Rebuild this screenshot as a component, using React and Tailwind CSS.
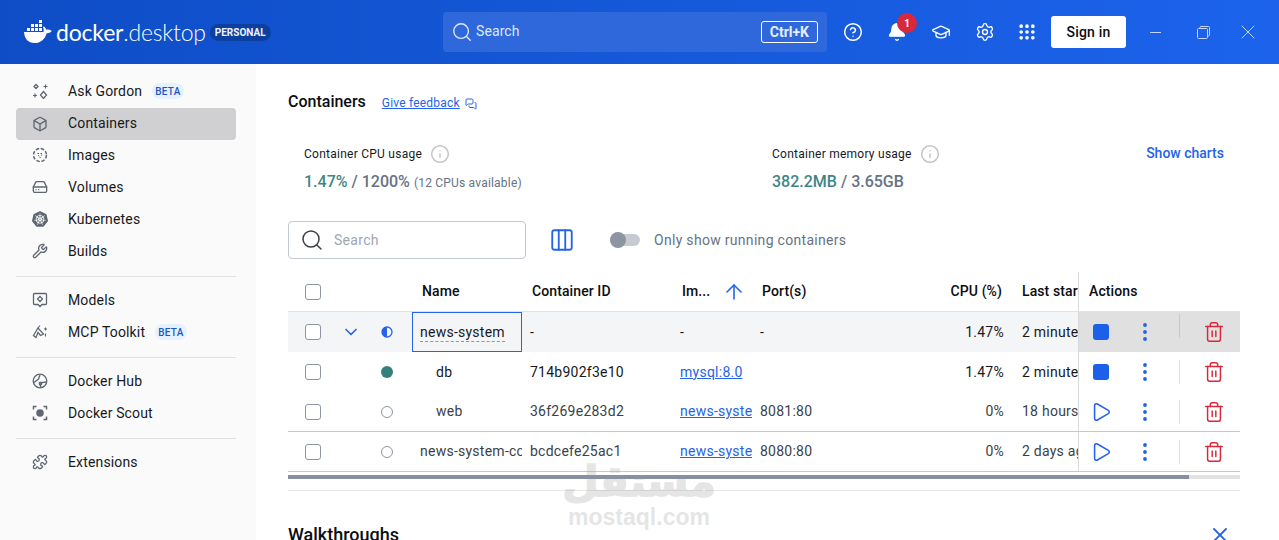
import {
  Box,
  Search,
  CircleHelp,
  Bell,
  GraduationCap,
  Settings,
  Grip,
  HardDrive,
  Wrench,
  Puzzle,
  Info,
  Columns3,
  ArrowUp,
  ChevronDown,
  EllipsisVertical,
  Trash2,
  Play,
  X,
  MessagesSquare,
} from 'lucide-react'
import { SiKubernetes } from 'react-icons/si'

function WhaleLogo() {
  return (
    <svg width="29" height="24" viewBox="0 0 29 24" fill="white">
      <rect x="3" y="8" width="3" height="3" />
      <rect x="7" y="8" width="3" height="3" />
      <rect x="11" y="8" width="3" height="3" />
      <rect x="15" y="8" width="3" height="3" />
      <rect x="7" y="4" width="3" height="3" />
      <rect x="11" y="4" width="3" height="3" />
      <rect x="15" y="4" width="3" height="3" />
      <rect x="15" y="0" width="3" height="3" />
      <path d="M0 12h19.5c.4-1.8.2-3.4-.6-4.8l1-.7c1.300.9 2 2 2.200 3.300 1.700-.5 3.500-.2 5.400.9.300.2.300.4.100.600-1.200 1.400-2.900 2-4.900 1.900C20.800 19.500 16.700 23 10.500 23 4.300 23 .6 19 0 12z" />
    </svg>
  )
}

function GordonIcon() {
  return (
    <svg width="16" height="16" viewBox="0 0 16 16" fill="none" stroke="#5f6672" strokeWidth="1.300">
      <path d="M4 1.500 6 3.500 4 5.500 2 3.500z" />
      <path d="M11.500 3.500h4M13.500 1.500v4" strokeWidth="1.200" />
      <path d="M1 12.500h4M3 10.500v4" strokeWidth="1.200" />
      <path d="M11.500 8.500 14.500 12 11.500 15.500 8.500 12z" />
    </svg>
  )
}

function ImagesIcon() {
  return (
    <svg width="16" height="16" viewBox="0 0 16 16" fill="none" stroke="#5f6672" strokeWidth="1.500">
      <circle cx="8" cy="8" r="6.500" strokeDasharray="3.500 1.600" />
      <path d="M5.500 6.500h5L8 11z" strokeWidth="1" strokeDasharray="1.500 1.500" />
    </svg>
  )
}

function ModelsIcon() {
  return (
    <svg width="16" height="16" viewBox="0 0 16 16" fill="none" stroke="#5f6672" strokeWidth="1.300">
      <path d="M2.500 1.500h11a1 1 0 0 1 1 1v9a1 1 0 0 1-1 1H10l-2 2-2-2H2.500a1 1 0 0 1-1-1v-9a1 1 0 0 1 1-1z" />
      <path d="M8 4.500 10.500 7 8 9.500 5.500 7z" />
    </svg>
  )
}

function McpIcon() {
  return (
    <svg width="16" height="16" viewBox="0 0 16 16" fill="none" stroke="#5f6672" strokeWidth="1.300">
      <path d="M1.500 11.500 6 4l5.500 6-3 1.500L6 8.500l-2 5z" />
      <path d="M6 4l2-2.500M13.500 3.500v3M12 5h3M13.500 9.500v3" strokeWidth="1.100" />
    </svg>
  )
}

function HubIcon() {
  return (
    <svg width="16" height="16" viewBox="0 0 16 16" fill="none" stroke="#5f6672" strokeWidth="1.300">
      <circle cx="8" cy="8" r="6.800" />
      <path d="M2 9.500 6.500 6 8 2M14.500 9 9.500 9.500 8 11.500l1 3" />
      <circle cx="8.500" cy="10.500" r="1.300" />
    </svg>
  )
}

function ScoutIcon() {
  return (
    <svg width="16" height="16" viewBox="0 0 16 16" fill="none" stroke="#5f6672" strokeWidth="1.500">
      <circle cx="8" cy="8" r="3" fill="#5f6672" />
      <path d="M1.500 4.500V1.500h3M11.500 1.500h3v3M14.500 11.500v3h-3M4.500 14.500h-3v-3" />
    </svg>
  )
}

function HalfStatus() {
  return (
    <svg width="12" height="12" viewBox="0 0 12 12">
      <circle cx="6" cy="6" r="5" fill="none" stroke="#2563eb" strokeWidth="1.300" />
      <path d="M6 1a5 5 0 0 0 0 10z" fill="#2563eb" />
    </svg>
  )
}

function Beta() {
  return (
    <span className="ml-[10px] inline-flex h-[16px] items-center rounded-full bg-[#e5f1fd] px-[3px] text-[10px] font-medium tracking-[0.3px] text-[#1d56c4]">
      BETA
    </span>
  )
}

function NavItem({ icon, label, active, beta }) {
  return (
    <div className={`ml-[16px] mr-[20px] flex h-[32px] items-center rounded-[4px] pl-[16px] text-[14px] tracking-[0.15px] text-[#17191d] ${active ? 'bg-[#d0d0d2]' : ''}`}>
      <span className="flex w-[16px] justify-center">{icon}</span>
      <span className={`ml-[20px] ${active ? 'pb-[2px]' : ''}`}>{label}</span>
      {beta && <Beta />}
    </div>
  )
}

function Divider() {
  return <div className="ml-[16px] mr-[20px] mb-[7px] mt-[9px] h-px bg-[#e2e2e4]" />
}

function Sidebar() {
  const ic = 'h-[16px] w-[16px] text-[#5f6672]'
  return (
    <aside className="w-[256px] shrink-0 bg-[#fafafa] pt-[11px]">
      <NavItem icon={<GordonIcon />} label="Ask Gordon" beta />
      <div className="mt-px" />
      <NavItem icon={<Box className={ic} />} label="Containers" active />
      <div className="-mt-px" />
      <NavItem icon={<ImagesIcon />} label="Images" />
      <NavItem icon={<HardDrive className={ic} />} label="Volumes" />
      <NavItem icon={<SiKubernetes className={ic} />} label="Kubernetes" />
      <NavItem icon={<Wrench className={ic} />} label="Builds" />
      <Divider />
      <NavItem icon={<ModelsIcon />} label="Models" />
      <NavItem icon={<McpIcon />} label="MCP Toolkit" beta />
      <Divider />
      <NavItem icon={<HubIcon />} label="Docker Hub" />
      <NavItem icon={<ScoutIcon />} label="Docker Scout" />
      <Divider />
      <NavItem icon={<Puzzle className={ic} />} label="Extensions" />
    </aside>
  )
}

function Header() {
  return (
    <header className="flex h-[64px] shrink-0 items-center bg-gradient-to-r from-[#0e4dc6] to-[#1c63ec] text-white">
      <div className="ml-[24px] flex w-[419px] items-center">
        <WhaleLogo />
        <span className="ml-[3px] font-['Lato'] text-[23px] leading-none tracking-[-0.2px]">
          docker<span className="font-light">.desktop</span>
        </span>
        <span className="ml-[4px] rounded-full bg-[#0d3f9f] px-[5px] py-px text-[10px] font-bold text-[#eef3fd]">PERSONAL</span>
      </div>
      <div className="flex h-[40px] w-[384px] items-center rounded-[4px] bg-[#2f68db] pl-[8px] pr-[9px]">
        <Search className="h-[22px] w-[22px] text-[#dfe8fb]" strokeWidth={1.500} />
        <span className="ml-[3px] pb-[2px] text-[14px] tracking-[0.1px] text-[#dfe8fb]">Search</span>
        <span className="ml-auto rounded-[3px] border border-white px-[8px] text-[14px] font-bold leading-[20px] text-[#e6edfc]">Ctrl+K</span>
      </div>
      <CircleHelp className="ml-[16px] h-[20px] w-[20px]" strokeWidth={1.800} />
      <div className="relative ml-[24px] flex h-[20px] w-[20px] items-center justify-center">
        <Bell className="h-[20px] w-[20px]" fill="white" strokeWidth={1.500} />
        <span className="absolute left-[10px] top-[-9px] flex h-[20px] w-[20px] items-center justify-center rounded-full bg-[#d8283c] text-[10px] font-bold">1</span>
      </div>
      <GraduationCap className="ml-[24px] h-[20px] w-[20px]" strokeWidth={1.600} />
      <Settings className="ml-[24px] h-[20px] w-[20px]" strokeWidth={1.600} />
      <Grip className="ml-[22px] h-[20px] w-[20px]" strokeWidth={2.400} />
      <button className="ml-[14px] h-[32px] w-[75px] rounded-[3px] bg-white text-[14px] font-medium tracking-[0.2px] text-[#0b0d12]">Sign in</button>
      <svg className="ml-[24px] text-[#c5d6f8]" width="12" height="12" viewBox="0 0 12 12" stroke="currentColor" fill="none">
        <path d="M0 6.500h11" />
      </svg>
      <svg className="ml-[35px] text-[#c5d6f8]" width="13" height="13" viewBox="0 0 13 13" stroke="currentColor" fill="none">
        <rect x="0.500" y="2.500" width="10" height="10" rx="1" />
        <path d="M3 2.500V1.500a1 1 0 0 1 1-1h7.500a1 1 0 0 1 1 1V9a1 1 0 0 1-1 1h-1" />
      </svg>
      <X className="ml-[26px] h-[24px] w-[24px] text-[#c5d6f8]" strokeWidth={1} />
    </header>
  )
}

function Stat({ label, children, className }) {
  return (
    <div className={className}>
      <div className="flex items-center text-[12px] tracking-[0.25px] text-[#17191d]">
        {label}
        <Info className="ml-[8px] h-[20px] w-[20px] text-[#c4c5c7]" strokeWidth={1.800} />
      </div>
      <div className="mt-[6px] flex items-baseline text-[16px] font-medium text-[#677285]">{children}</div>
    </div>
  )
}

function Check() {
  return <span className="block h-[16px] w-[16px] rounded-[3px] border-[1.500px] border-[#8d95a3] bg-white" />
}

function Actions({ running, selected }) {
  return (
    <div className={`flex h-full w-[162px] shrink-0 items-center border-l border-[#d8d9db] pl-[14px] ${selected ? 'bg-[#e0e0e0]' : 'bg-white'}`}>
      {running ? (
        <span className="block h-[16px] w-[16px] rounded-[3px] bg-[#1c5fe8]" />
      ) : (
        <Play className="-m-[3px] h-[22px] w-[22px] text-[#2563eb]" strokeWidth={1.700} />
      )}
      <EllipsisVertical className="-my-[4px] ml-[24px] h-[24px] w-[24px] text-[#2563eb]" strokeWidth={1.800} />
      <span className={`ml-[22px] h-[24px] w-px ${selected ? 'mb-[12px] bg-[#c9c9c9]' : 'bg-[#e0e1e3]'}`} />
      <Trash2 className="ml-[23px] h-[22px] w-[22px] text-[#d8283c]" strokeWidth={1.600} />
    </div>
  )
}

function Row({ status, chevron, name, indent, nameBox, id, image, port, cpu, started, running, selected, dim, borderB }) {
  return (
    <div className={`flex h-[40px] items-center text-[14px] tracking-[0.25px] ${selected ? 'bg-[#f4f5f7]' : ''} ${borderB ? 'border-b border-[#c8c9cc]' : ''} ${dim ? 'text-[#3b3f47]' : 'text-[#17191d]'}`}>
      <div className="flex w-[50px] shrink-0 justify-center"><Check /></div>
      <div className="flex w-[25px] shrink-0 justify-center">
        {chevron && <ChevronDown className="h-[20px] w-[20px] text-[#2563eb]" />}
      </div>
      <div className="mr-px flex w-[48px] shrink-0 justify-center">{status}</div>
      <div className={`h-full w-[110px] shrink-0 overflow-hidden whitespace-nowrap ${nameBox ? 'flex items-center border border-[#2563eb] pl-[7px]' : 'flex items-center pl-[8px]'}`}>
        <span className={`${indent ? 'pl-[16px]' : ''} ${nameBox ? 'border-b border-dashed border-[#8d95a3] leading-[18px]' : ''}`}>{name}</span>
      </div>
      <div className="w-[150px] shrink-0 pl-[8px]">{id}</div>
      <div className="w-[80px] shrink-0 overflow-hidden whitespace-nowrap pl-[8px]">
        {image === '-' ? image : <a className="text-[#2563eb] underline">{image}</a>}
      </div>
      <div className="w-[190px] shrink-0 pl-[8px]">{port}</div>
      <div className="w-[62px] shrink-0 text-right">{cpu}</div>
      <div className="ml-[18px] w-[56px] shrink-0 overflow-hidden whitespace-nowrap">{started}</div>
      <Actions running={running} selected={selected} />
    </div>
  )
}

function ContainerTable() {
  const running = <span className="block h-[12px] w-[12px] rounded-full bg-[#34807b]" />
  const stopped = <span className="block h-[12px] w-[12px] rounded-full border-[1.500px] border-[#8d95a3]" />
  return (
    <div className="mt-[13px]">
      <div className="flex h-[40px] items-center border-b border-[#e1e2e5] text-[14px] font-medium tracking-[0.1px] text-[#0b0d12]">
        <div className="flex w-[50px] shrink-0 justify-center"><Check /></div>
        <div className="w-[84px] shrink-0" />
        <div className="w-[110px] shrink-0">Name</div>
        <div className="w-[150px] shrink-0">Container ID</div>
        <div className="flex w-[80px] shrink-0 items-center">
          Im...
          <ArrowUp className="ml-[12px] h-[24px] w-[24px] text-[#2563eb]" strokeWidth={1.600} />
        </div>
        <div className="w-[178px] shrink-0">Port(s)</div>
        <div className="w-[62px] shrink-0 text-right">CPU (%)</div>
        <div className="ml-[20px] w-[56px] shrink-0 overflow-hidden whitespace-nowrap">Last started</div>
        <div className="flex h-full w-[162px] shrink-0 items-center border-l border-[#d8d9db] pl-[10px]">Actions</div>
      </div>
      <Row status={<HalfStatus />} chevron name="news-system" nameBox id="-" image="-" port="-" cpu="1.47%" started="2 minutes ago" running selected />
      <Row status={running} name="db" indent id="714b902f3e10" image="mysql:8.0" cpu="1.47%" started="2 minutes ago" running />
      <Row status={stopped} name="web" indent id="36f269e283d2" image="news-system-web" port="8081:80" cpu="0%" started="18 hours ago" dim borderB />
      <Row status={stopped} name="news-system-cc" id="bcdcefe25ac1" image="news-system-cc" port="8080:80" cpu="0%" started="2 days ago" dim borderB />
      <div className="mt-[3px] h-[4px] bg-[#e2e2e4]">
        <div className="h-full w-[901px] bg-[#8790a1]" />
      </div>
    </div>
  )
}

export default function App() {
  return (
    <div className="relative flex h-[540px] w-full flex-col overflow-hidden bg-white font-['Roboto',sans-serif]">
      <Header />
      <div className="flex min-h-0 flex-1">
        <Sidebar />
        <main className="min-w-0 flex-1 pl-[32px] pr-[39px] pt-[26px]">
          <div className="flex h-[24px] items-center">
            <h1 className="text-[16px] font-medium text-[#0b0d12]">Containers</h1>
            <a className="ml-[16px] mt-[2px] text-[12px] tracking-[0.2px] text-[#2563eb] underline">Give feedback</a>
            <MessagesSquare className="ml-[5px] mt-[3px] h-[12px] w-[12px] text-[#2563eb]" />
          </div>
          <div className="mt-[30px] flex items-start pl-[16px] pr-[16px]">
            <Stat label="Container CPU usage" className="w-[468px]">
              <span className="text-[#3f8585]">1.47%</span>
              <span className="ml-[4px]">/ 1200%</span>
              <span className="ml-[4px] text-[12px] font-normal tracking-[0.2px]">(12 CPUs available)</span>
            </Stat>
            <Stat label="Container memory usage">
              <span className="text-[#3f8585]">382.2MB</span>
              <span className="ml-[4px]">/ 3.65GB</span>
            </Stat>
            <a className="-mt-px ml-auto text-[14px] font-medium text-[#2563eb]">Show charts</a>
          </div>
          <div className="mt-[27px] flex items-center">
            <div className="flex h-[38px] w-[238px] items-center rounded-[4px] border border-[#c4c8d1] pl-[11px]">
              <Search className="h-[24px] w-[24px] text-[#3b3f47]" strokeWidth={1.500} />
              <span className="ml-[10px] text-[14px] tracking-[0.3px] text-[#a0a6b0]">Search</span>
            </div>
            <Columns3 className="ml-[23px] h-[26px] w-[26px] text-[#2563eb]" strokeWidth={1.700} />
            <div className="relative ml-[35px] h-[12px] w-[30px] rounded-full bg-[#c7cad1]">
              <span className="absolute left-0 top-[-2px] h-[16px] w-[16px] rounded-full bg-[#8d95a3]" />
            </div>
            <span className="ml-[14px] text-[14px] tracking-[0.3px] text-[#677285]">Only show running containers</span>
          </div>
          <ContainerTable />
          <div className="mt-[11px] h-px bg-[#e6e7e9]" />
          <div className="mt-[30px] flex items-center justify-between">
            <h2 className="text-[18px] font-medium text-[#0b0d12]">Walkthroughs</h2>
            <X className="mr-[8px] h-[24px] w-[24px] text-[#2563eb]" strokeWidth={1.800} />
          </div>
        </main>
      </div>
      <div className="pointer-events-none absolute left-[568px] top-[454px] flex w-[142px] flex-col items-center text-[#9a9a9a] opacity-25">
        <span className="font-['DejaVu_Sans'] text-[42px] font-bold leading-[56px] [-webkit-text-stroke:1.500px_#9a9a9a]">مستقل</span>
        <span className="-mt-[5px] font-['Liberation_Sans'] text-[23px] font-bold leading-[24px]">mostaql.com</span>
      </div>
    </div>
  )
}
